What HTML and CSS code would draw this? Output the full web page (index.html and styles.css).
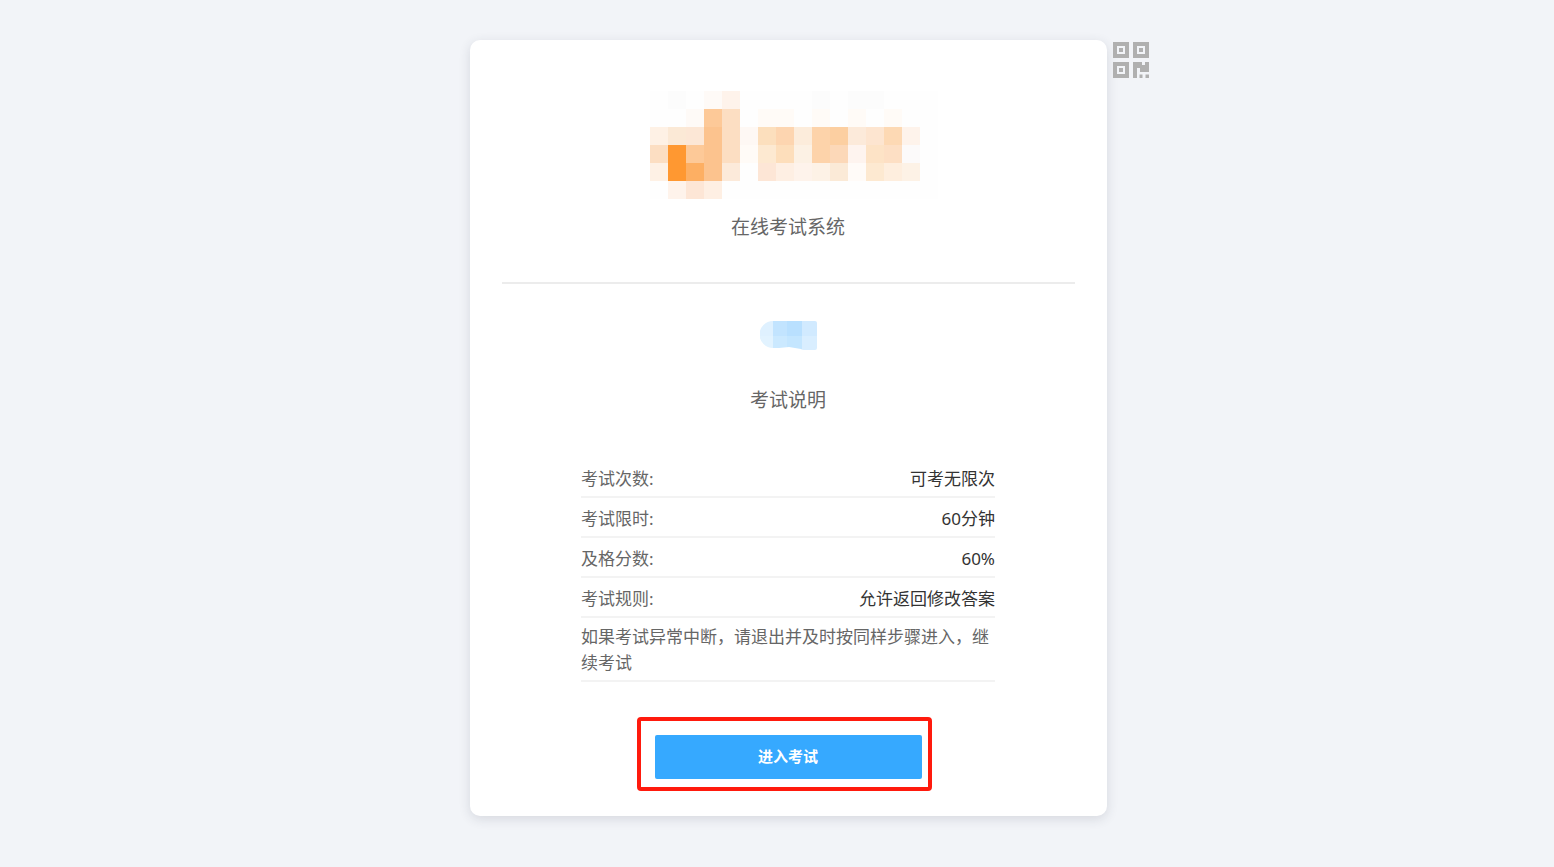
FILE: index.html
```html
<!DOCTYPE html>
<html lang="zh-CN">
<head>
<meta charset="utf-8">
<meta name="viewport" content="width=device-width, initial-scale=1">
<title>在线考试系统</title>
<link rel="stylesheet" href="styles.css">
</head>
<body>
<main class="page">
  <section class="card">
    <button class="qr" type="button" aria-label="二维码">
      <svg viewBox="0 0 36 36" width="36" height="36" fill="#b0b0b0" aria-hidden="true">
        <path fill-rule="evenodd" d="M0 0h16v16H0zM4 4v8h8V4zM6 6h4v4H6zM20 0h16v16H20zM24 4v8h8V4zM26 6h4v4h-4zM0 20h16v16H0zM4 24v8h8v-8zM6 26h4v4H6z"/>
        <path d="M20 20h9v3h3v-3h4v10h-9v-4h-3v10h-4zM26.500 32.500h3V36h-3zM32.500 32.500H36V36h-3.500z"/>
      </svg>
    </button>
    <header class="head">
      <svg class="logo" viewBox="0 0 288 108" width="288" height="108" shape-rendering="crispEdges" aria-hidden="true">
        <path fill="#fefefe" d="M0 0h288v108H0z"/>
        <path fill="#fcfcfc" d="M18 0h18v18H18zM162 0h18v18h-18zM198 0h36v18h-36z"/>
        <path fill="#fefaf7" d="M54 0h18v18H54zM36 18h18v18H36z"/>
        <path fill="#fef3eb" d="M72 0h18v18H72zM252 36h18v18h-18zM18 90h18v18H18zM144 72h18v18h-18z"/>
        <path fill="#fdc998" d="M54 18h18v18H54zM36 54h18v18H36z"/>
        <path fill="#fcdec2" d="M72 18h18v54H72zM0 54h18v18H0z"/>
        <path fill="#fffbf7" d="M108 18h36v18h-36zM162 18h18v18h-18zM198 18h18v18h-18zM234 18h18v18h-18zM90 54h18v18H90z"/>
        <path fill="#fef1e5" d="M0 36h18v18H0zM0 72h18v18H0z"/>
        <path fill="#fbe9d6" d="M18 36h18v18H18z"/>
        <path fill="#fce7d6" d="M36 36h18v18H36z"/>
        <path fill="#fcc38e" d="M54 36h18v54H54z"/>
        <path fill="#fef8f4" d="M90 36h18v18H90z"/>
        <path fill="#fcdfbd" d="M108 36h18v18h-18z"/>
        <path fill="#fdd5b0" d="M126 36h18v18h-18z"/>
        <path fill="#fcecdb" d="M144 36h18v18h-18z"/>
        <path fill="#fdd3aa" d="M162 36h18v36h-18z"/>
        <path fill="#fccfa1" d="M180 36h18v18h-18z"/>
        <path fill="#fceada" d="M198 36h18v18h-18zM72 72h18v18H72z"/>
        <path fill="#fde5d0" d="M216 36h18v18h-18z"/>
        <path fill="#fdd9b4" d="M234 36h18v18h-18z"/>
        <path fill="#ff9831" d="M18 54h18v36H18z"/>
        <path fill="#fde9d1" d="M108 54h18v18h-18zM216 72h18v18h-18z"/>
        <path fill="#fddebb" d="M126 54h18v18h-18z"/>
        <path fill="#fcf1e4" d="M144 54h18v18h-18z"/>
        <path fill="#fcd8b8" d="M180 54h18v18h-18z"/>
        <path fill="#fef4ef" d="M198 54h18v18h-18z"/>
        <path fill="#fde3c6" d="M216 54h18v18h-18z"/>
        <path fill="#fddfc4" d="M234 54h18v18h-18z"/>
        <path fill="#fcfafa" d="M252 54h18v18h-18z"/>
        <path fill="#fdaf63" d="M36 72h18v18H36z"/>
        <path fill="#fde6d6" d="M108 72h18v18h-18zM36 90h18v18H36z"/>
        <path fill="#feefe3" d="M126 72h18v18h-18zM54 90h18v18H54z"/>
        <path fill="#fdf2e6" d="M162 72h18v18h-18zM252 72h18v18h-18z"/>
        <path fill="#fbead7" d="M180 72h18v18h-18z"/>
        <path fill="#fffbf8" d="M198 72h18v18h-18z"/>
        <path fill="#feeede" d="M234 72h18v18h-18z"/>
      </svg>
      <h1 class="title">在线考试系统</h1>
    </header>
    <svg class="badge" viewBox="0 0 57 29" width="57" height="29" aria-hidden="true">
      <defs><clipPath id="pill"><path d="M13 0h42q2 0 2 2v25q0 2-2 2H44q-2 0-3-1L29 26l-10 1h-6A13 13 0 0 1 13 0z"/></clipPath></defs>
      <g clip-path="url(#pill)" shape-rendering="crispEdges">
        <path fill="#dff1ff" d="M0 0h13v15H0z"/><path fill="#e2f3ff" d="M0 15h13v14H0z"/>
        <path fill="#c2e4ff" d="M13 0h14v15H13z"/><path fill="#cbe9ff" d="M13 15h14v14H13z"/>
        <path fill="#b9e0ff" d="M27 0h15v15H27z"/><path fill="#c4e6ff" d="M27 15h15v14H27z"/>
        <path fill="#d1eaff" d="M42 0h15v15H42z"/><path fill="#d9eeff" d="M42 15h15v14H42z"/>
      </g>
    </svg>
    <h2 class="title subtitle">考试说明</h2>
    <div class="details">
      <dl class="list">
        <div class="row"><dt>考试次数:</dt><dd>可考无限次</dd></div>
        <div class="row"><dt>考试限时:</dt><dd>60分钟</dd></div>
        <div class="row"><dt>及格分数:</dt><dd>60%</dd></div>
        <div class="row"><dt>考试规则:</dt><dd>允许返回修改答案</dd></div>
      </dl>
      <p class="note">如果考试异常中断，请退出并及时按同样步骤进入，继续考试</p>
    </div>
    <div class="action">
      <button class="enter" type="button">进入考试</button>
      <span class="marker"></span>
    </div>
  </section>
</main>
</body>
</html>
```

FILE: styles.css
```css
* { box-sizing: border-box; }
body {
  margin: 0;
  background: #f2f4f8;
  color: #666;
  font-family: "Noto Sans", "Noto Sans CJK SC", sans-serif;
  font-size: 17px;
}
.page {
  display: flex;
  justify-content: center;
  min-height: 100vh;
  align-items: flex-start;
  padding: 40px 0 48px 22px;
}
.card {
  position: relative;
  display: flex;
  flex-direction: column;
  align-items: center;
  width: 100%;
  max-width: 637px;
  padding: 51px 32px 37px;
  background: #fff;
  border-radius: 10px;
  box-shadow: 0 3px 12px rgba(40, 50, 70, 0.14);
}
.qr {
  position: absolute;
  top: 2px;
  left: calc(100% + 6px);
  padding: 0;
  border: 0;
  background: none;
  cursor: pointer;
}
.qr svg { display: block; }
.head {
  display: flex;
  flex-direction: column;
  align-items: center;
  align-self: stretch;
  padding-bottom: 41px;
  border-bottom: 2px solid #ececec;
}
.logo {
  display: block;
  max-width: 100%;
  margin-left: 12px;
}
.title {
  margin: 14px 0 0;
  font-size: 19px;
  line-height: 28px;
  font-weight: 400;
}
.badge { margin-top: 37px; }
.subtitle { margin-top: 36px; }
.details {
  width: 100%;
  max-width: 414px;
  margin-top: 44px;
}
.list { margin: 0; }
.row {
  display: flex;
  justify-content: space-between;
  padding: 8px 0 4px;
  line-height: 26px;
  border-bottom: 2px solid #f3f3f3;
}
.row dd { margin: 0; color: #333; }
.note {
  margin: 0;
  padding: 6px 0 4px;
  line-height: 26px;
  border-bottom: 2px solid #f3f3f3;
}
.action {
  position: relative;
  width: 100%;
  max-width: 267px;
  margin-top: 53px;
}
.enter {
  display: block;
  width: 100%;
  height: 44px;
  padding: 0 0 4px;
  border: 0;
  border-radius: 2px;
  background: #36a9ff;
  color: #fff;
  font: 700 15px "Noto Sans", "Noto Sans CJK SC", sans-serif;
  cursor: pointer;
}
.marker {
  position: absolute;
  inset: -18px -10px -12px -18px;
  border: 4px solid #ff1a0d;
  border-radius: 4px;
  pointer-events: none;
}
```
